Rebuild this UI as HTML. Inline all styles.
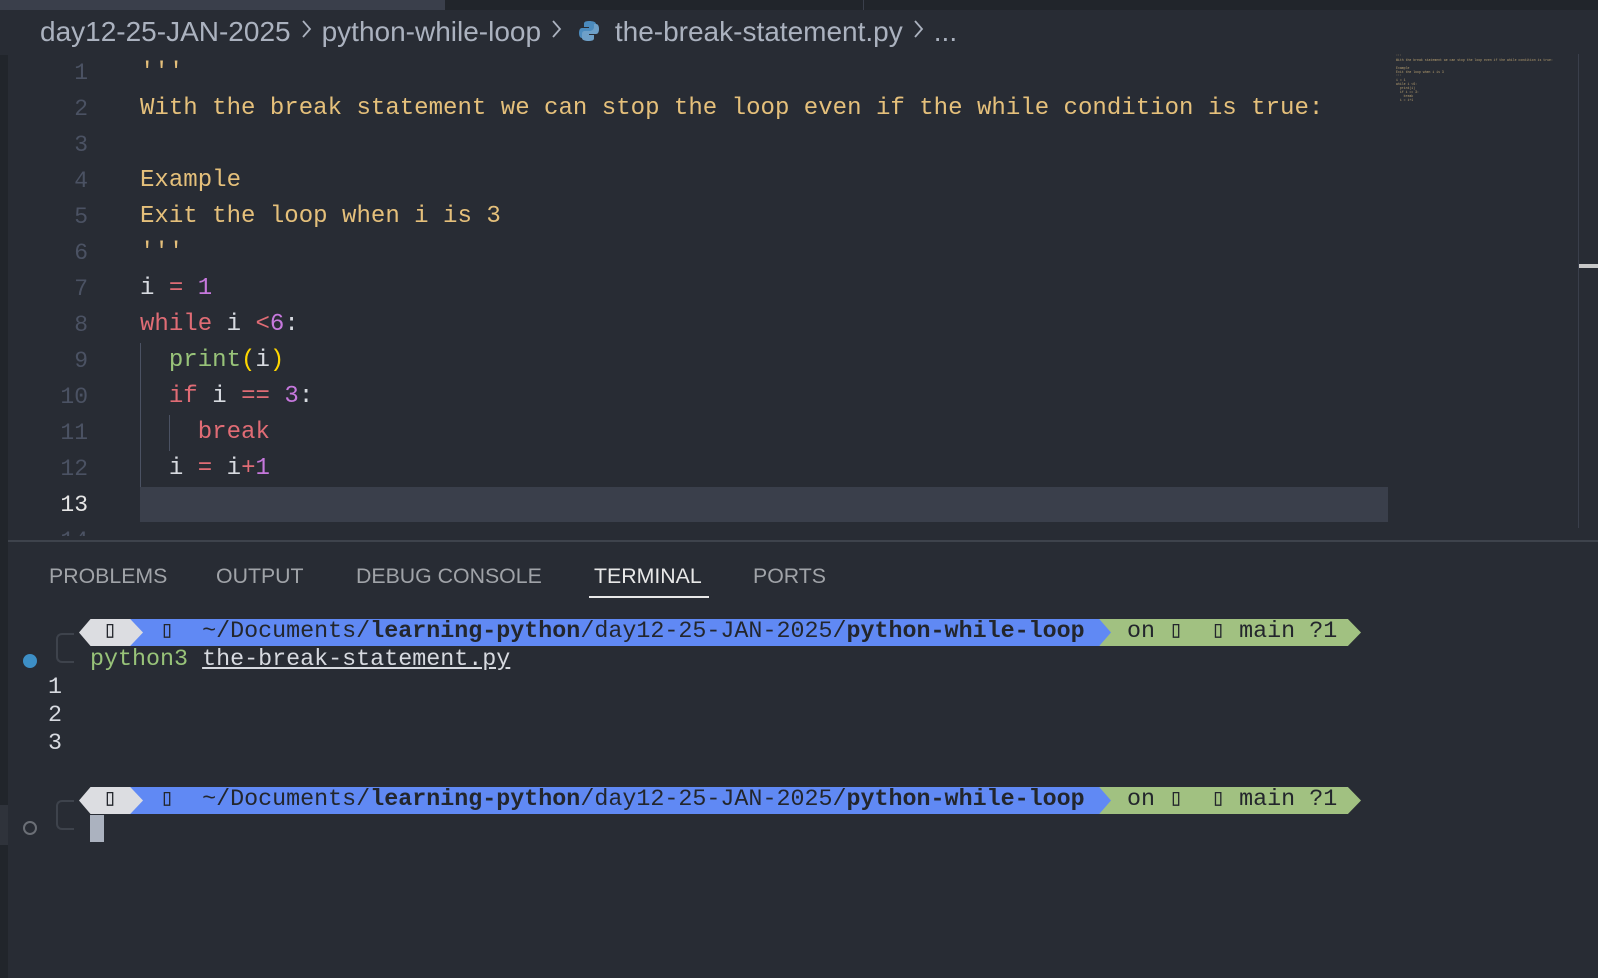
<!DOCTYPE html>
<html><head><meta charset="utf-8"><style>
*{margin:0;padding:0;box-sizing:border-box}
body{width:1598px;height:978px;background:#282c34;position:relative;overflow:hidden;font-family:"Liberation Sans",sans-serif}
.a{position:absolute;white-space:pre}
.m{font-family:"Liberation Mono","DejaVu Sans Mono",monospace}
.code{font-size:24.05px;color:#e5c07b;line-height:36px}
.ln{font-size:23px;color:#4b5263;width:88px;text-align:right;left:0;line-height:36px}
.k{color:#e06c75}.n{color:#c678dd}.v{color:#d7dae0}.f{color:#98c379}.p{color:#ffd700}
.tab{font-size:21.3px;color:#a0a3a8;top:564px}
.t{font-size:23.35px;line-height:28px;color:#d7dae0}
.pb{font-size:23.35px;line-height:27px;color:#23262c}
.sep{display:inline-block;margin:0 10px 0 9px;vertical-align:1px}
</style></head><body>
<div class="a" style="left:0;top:0;width:1598px;height:10px;background:#21252b"></div>
<div class="a" style="left:0;top:0;width:445px;height:10px;background:#3a3f4b"></div>
<div class="a" style="left:863px;top:0;width:1px;height:10px;background:#3a3f4b"></div>
<div class="a" style="left:0;top:10px;width:8px;height:968px;background:#21252b"></div>
<div class="a" style="left:0;top:10px;width:1598px;height:45px;background:#282c34"></div>
<div class="a" style="left:40px;top:16px;font-size:28px;color:#abb2bf">day12-25-JAN-2025<svg class="sep" width="12" height="22" viewBox="0 0 12 22"><path d="M3 3l7 8-7 8" stroke="#abb2bf" stroke-width="1.8" fill="none"/></svg>python-while-loop<svg class="sep" width="12" height="22" viewBox="0 0 12 22"><path d="M3 3l7 8-7 8" stroke="#abb2bf" stroke-width="1.8" fill="none"/></svg><svg width="22" height="22" viewBox="0 0 22 22" style="vertical-align:-1px;margin:0 7px 0 6px"><path d="M11 1c-5 0-5 2-5 3v3h5v1H4c-2 0-3 2-3 5s1 5 3 5h2v-3c0-2 2-4 4-4h5c2 0 3-1 3-3V4c0-2-3-3-7-3z" fill="#4b8bbe"/><path d="M11 21c5 0 5-2 5-3v-3h-5v-1h7c2 0 3-2 3-5s-1-5-3-5h-2v3c0 2-2 4-4 4H7c-2 0-3 1-3 3v4c0 2 3 3 7 3z" fill="#6ea0c8"/></svg> the-break-statement.py<svg class="sep" width="12" height="22" viewBox="0 0 12 22"><path d="M3 3l7 8-7 8" stroke="#abb2bf" stroke-width="1.8" fill="none"/></svg>...</div>

<div class="a" style="left:140px;top:487px;width:1248px;height:35px;background:#3a3f4b"></div>
<div class="a" style="left:140px;top:343px;width:1px;height:144px;background:#4b5263"></div>
<div class="a" style="left:169px;top:415px;width:1px;height:36px;background:#4b5263"></div>

<div class="a m ln" style="top:55px">1
2
3
4
5
6
7
8
9
10
11
12
<span style="color:#e6e6e6">13</span>
14</div>
<div class="a m code" style="left:140px;top:55px">'''
With the break statement we can stop the loop even if the while condition is true:

Example
Exit the loop when i is 3
'''
<span class="v">i</span> <span class="k">=</span> <span class="n">1</span>
<span class="k">while</span> <span class="v">i</span> <span class="k">&lt;</span><span class="n">6</span><span class="v">:</span>
  <span class="f">print</span><span class="p">(</span><span class="v">i</span><span class="p">)</span>
  <span class="k">if</span> <span class="v">i</span> <span class="k">==</span> <span class="n">3</span><span class="v">:</span>
    <span class="k">break</span>
  <span class="v">i</span> <span class="k">=</span> <span class="v">i</span><span class="k">+</span><span class="n">1</span></div>
<div class="a" style="left:0;top:536px;width:1598px;height:442px;background:#282c34"></div>
<div class="a" style="left:0;top:536px;width:8px;height:442px;background:#21252b"></div>

<div class="a" style="left:1396px;top:54px;width:164px;height:50px;font-family:'Liberation Mono',monospace;font-size:3.2px;line-height:4px;color:#b8a070">'''
With the break statement we can stop the loop even if the while condition is true:

Example
Exit the loop when i is 3
'''
i = 1
while i &lt;6:
  print(i)
  if i == 3:
    break
  i = i+1</div>
<div class="a" style="left:1578px;top:54px;width:1px;height:474px;background:#3a3f4b"></div>
<div class="a" style="left:1579px;top:264px;width:19px;height:4px;background:#c8c8c8"></div>

<div class="a" style="left:8px;top:540px;width:1590px;height:2px;background:#3e434c"></div>
<div class="a tab" style="left:49px">PROBLEMS</div>
<div class="a tab" style="left:216px">OUTPUT</div>
<div class="a tab" style="left:356px">DEBUG CONSOLE</div>
<div class="a tab" style="left:594px;color:#e8e8e8">TERMINAL</div>
<div class="a tab" style="left:753px">PORTS</div>
<div class="a" style="left:589px;top:596px;width:120px;height:2px;background:#e8e8e8"></div>

<div class="a" style="left:56px;top:633px;width:18px;height:30px;border:2px solid #3e434c;border-right:none;border-radius:6px 0 0 6px"></div>
<div class="a" style="left:1099px;top:619px;width:262px;height:27px;background:#a1c181;clip-path:polygon(0 0,95% 0,100% 50%,95% 100%,0 100%)"></div>
<div class="a" style="left:130px;top:619px;width:981px;height:27px;background:#6089f4;clip-path:polygon(0 0,98.8% 0,100% 50%,98.8% 100%,0 100%)"></div>
<div class="a" style="left:79px;top:619px;width:64px;height:27px;background:#dcdde1;clip-path:polygon(0 50%,18% 0,80% 0,100% 50%,80% 100%,18% 100%)"></div>
<div class="a m pb" style="left:103px;top:619px">▯</div>
<div class="a m pb" style="left:160px;top:619px">▯  ~/Documents/<b>learning-python</b>/day12-25-JAN-2025/<b>python-while-loop</b></div>
<div class="a m pb" style="left:1127px;top:619px">on ▯  ▯ main ?1</div>
<div class="a" style="left:23px;top:654px;width:14px;height:14px;border-radius:50%;background:#3d8fc6"></div>
<div class="a m t" style="left:90px;top:646px"><span class="f">python3</span> <span style="text-decoration:underline">the-break-statement.py</span></div>
<div class="a m t" style="left:48px;top:674px">1
2
3</div>

<div class="a" style="left:0;top:805px;width:8px;height:40px;background:#2f333b"></div>
<div class="a" style="left:56px;top:800px;width:18px;height:30px;border:2px solid #3e434c;border-right:none;border-radius:6px 0 0 6px"></div>
<div class="a" style="left:1099px;top:787px;width:262px;height:27px;background:#a1c181;clip-path:polygon(0 0,95% 0,100% 50%,95% 100%,0 100%)"></div>
<div class="a" style="left:130px;top:787px;width:981px;height:27px;background:#6089f4;clip-path:polygon(0 0,98.8% 0,100% 50%,98.8% 100%,0 100%)"></div>
<div class="a" style="left:79px;top:787px;width:64px;height:27px;background:#dcdde1;clip-path:polygon(0 50%,18% 0,80% 0,100% 50%,80% 100%,18% 100%)"></div>
<div class="a m pb" style="left:103px;top:787px">▯</div>
<div class="a m pb" style="left:160px;top:787px">▯  ~/Documents/<b>learning-python</b>/day12-25-JAN-2025/<b>python-while-loop</b></div>
<div class="a m pb" style="left:1127px;top:787px">on ▯  ▯ main ?1</div>
<div class="a" style="left:23px;top:821px;width:14px;height:14px;border-radius:50%;border:2px solid #6b6f76"></div>
<div class="a" style="left:90px;top:815px;width:14px;height:27px;background:#abb2bf"></div>
</body></html>
